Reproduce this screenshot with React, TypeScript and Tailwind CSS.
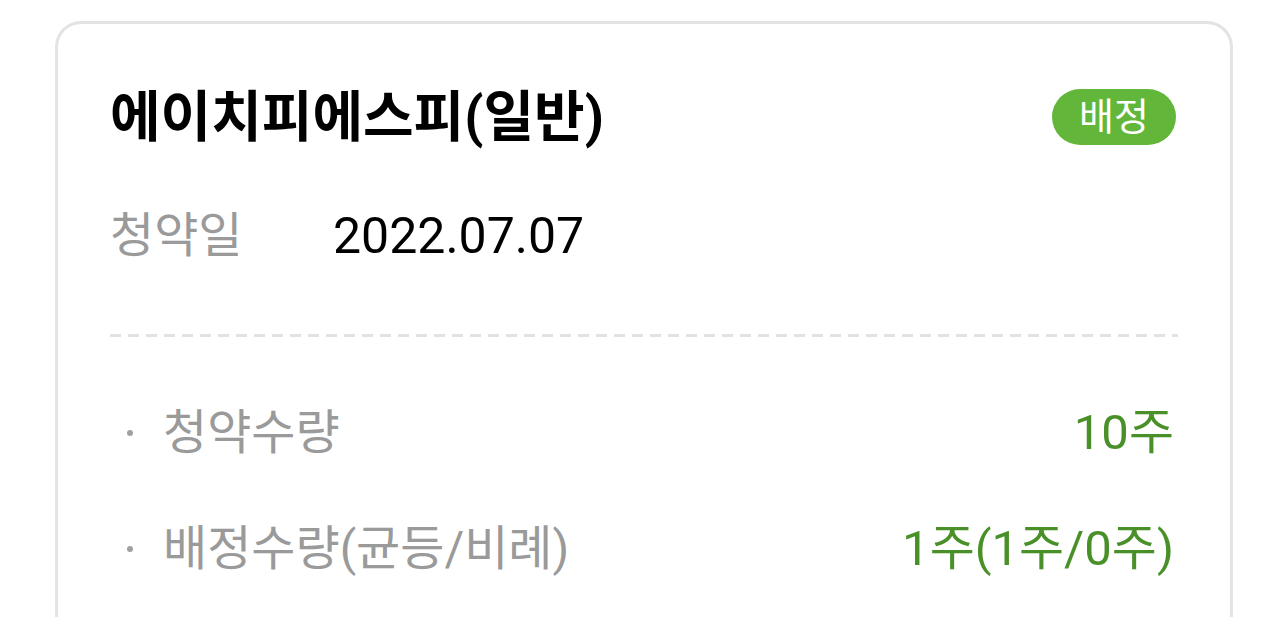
const font = { fontFamily: 'Roboto, "Noto Sans CJK KR", sans-serif' };

const rows = [
  { label: "청약수량", value: "10주" },
  { label: "배정수량(균등/비례)", value: "1주(1주/0주)" },
];

export default function App() {
  return (
    <div className="h-[627px] w-[1284px] overflow-hidden bg-white" style={font}>
      <div className="ml-[55px] mt-[21px] w-[1178px] rounded-t-[26px] border-[3px] border-b-0 border-[#e3e3e3] px-[52px] pb-10 pt-[65px]">
        <div className="flex items-center justify-between">
          <h1 className="text-[55px] font-bold leading-[56px] text-black">에이치피에스피(일반)</h1>
          <span className="mr-[2px] flex h-[56px] items-center rounded-full bg-[#62b73a] px-[27px] text-[38px] text-white">배정</span>
        </div>
        <div className="mt-[63px] flex items-center text-[48px] leading-[56px]">
          <span className="w-[223px] text-[#9a9a9a]">청약일</span>
          <span className="text-[50px] text-black">2022.07.07</span>
        </div>
        <div className="mt-[70px] h-[3px] bg-[repeating-linear-gradient(to_right,#e2e2e2_0_11px,transparent_11px_18px)]" />
        <div className="mt-[68px] flex flex-col gap-[60px] text-[48px] leading-[56px]">
          {rows.map((r) => (
            <div key={r.label} className="flex items-center justify-between">
              <span className="flex items-center text-[#9a9a9a]">
                <span className="ml-[17px] mr-[30px] h-[6px] w-[6px] rounded-full bg-[#a0a0a0]" />
                {r.label}
              </span>
              <span className="pr-[4px] text-[49px] text-[#4a9028]">{r.value}</span>
            </div>
          ))}
        </div>
      </div>
    </div>
  );
}
